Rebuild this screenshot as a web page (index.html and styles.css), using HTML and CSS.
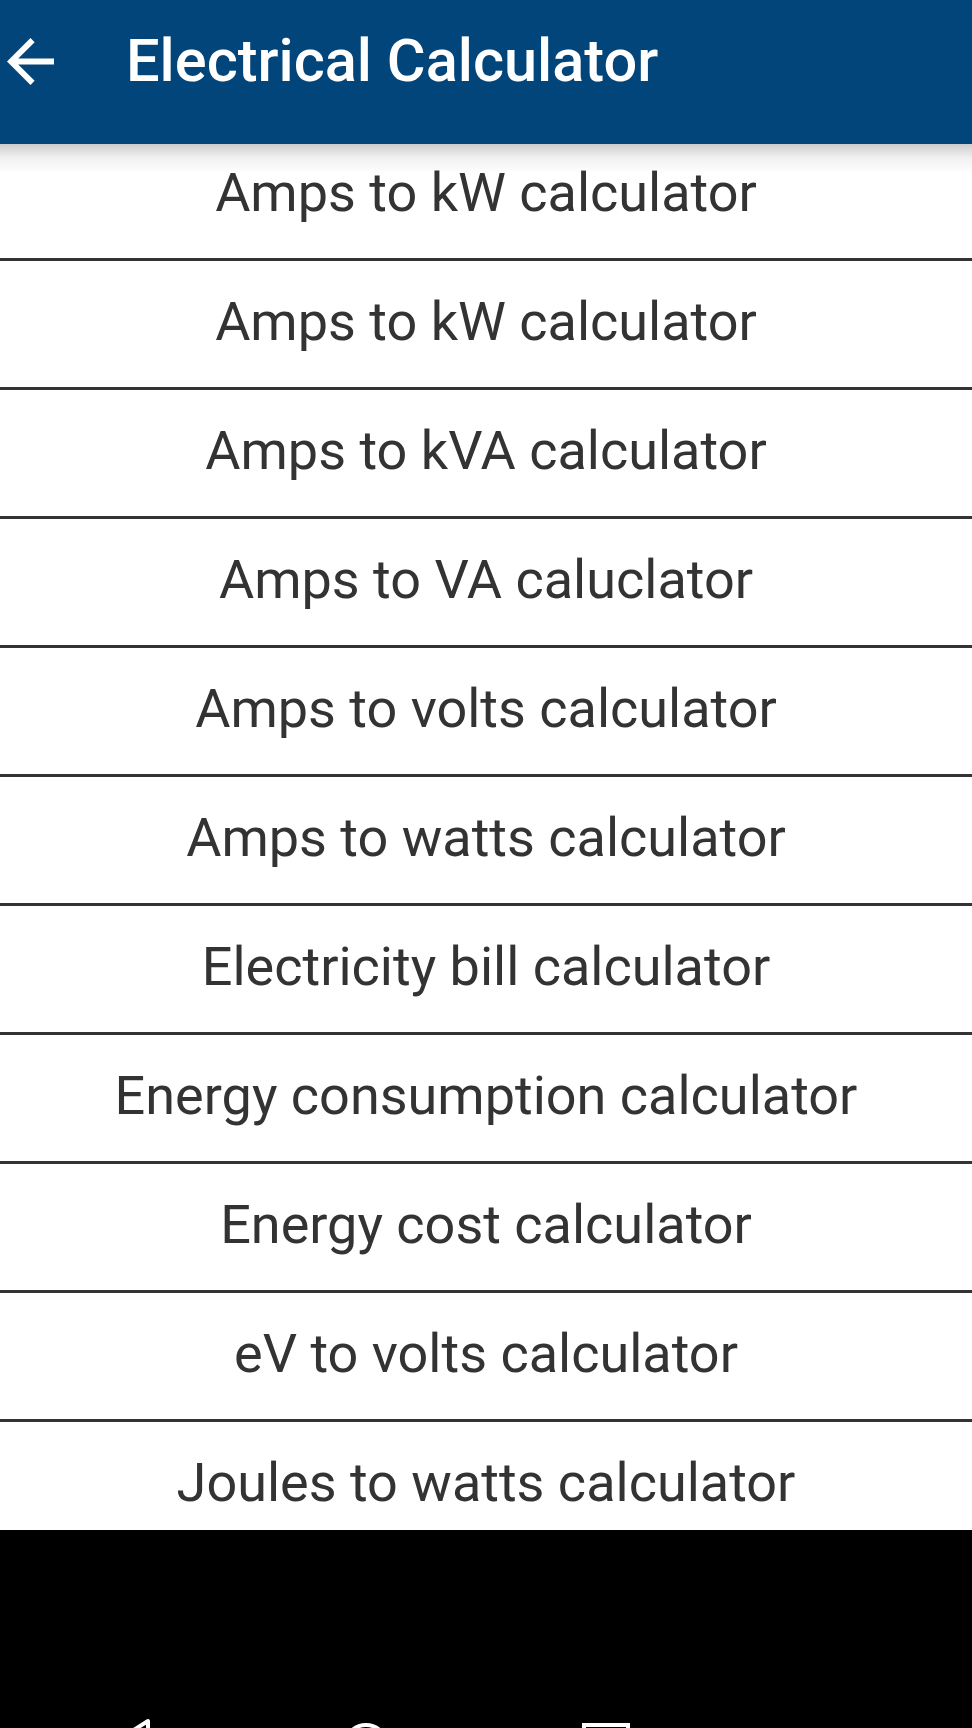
FILE: index.html
```html
<!DOCTYPE html>
<html lang="en">
<head>
<meta charset="utf-8">
<title>Electrical Calculator</title>
<link rel="stylesheet" href="styles.css">
</head>
<body>
<div class="screen">
  <header class="appbar">
    <svg class="back" width="47" height="47" viewBox="4 4 16 16" aria-hidden="true">
      <path fill="#ffffff" d="M20 11H7.83l5.59-5.59L12 4l-8 8 8 8 1.41-1.41L7.83 13H20v-2z"/>
    </svg>
    <h1 class="title">Electrical Calculator</h1>
  </header>
  <main class="content">
    <ul class="list">
      <li class="row">Amps to kW calculator</li>
      <li class="row">Amps to kW calculator</li>
      <li class="row">Amps to kVA calculator</li>
      <li class="row">Amps to VA caluclator</li>
      <li class="row">Amps to volts calculator</li>
      <li class="row">Amps to watts calculator</li>
      <li class="row">Electricity bill calculator</li>
      <li class="row">Energy consumption calculator</li>
      <li class="row">Energy cost calculator</li>
      <li class="row">eV to volts calculator</li>
      <li class="row">Joules to watts calculator</li>
    </ul>
  </main>
  <nav class="navbar">
    <svg class="navicons" width="972" height="198" viewBox="0 1530 972 198" aria-hidden="true">
      <polygon points="148,1721 148,1770 110,1745" fill="none" stroke="#ffffff" stroke-width="4" stroke-linejoin="round"/>
      <circle cx="366" cy="1746" r="21" fill="none" stroke="#ffffff" stroke-width="4"/>
      <rect x="584" y="1725" width="44" height="44" fill="none" stroke="#ffffff" stroke-width="4"/>
    </svg>
  </nav>
</div>
</body>
</html>
```

FILE: styles.css
```css
* {
  box-sizing: border-box;
}

html, body {
  margin: 0;
  padding: 0;
  background: #000000;
}

body {
  width: 972px;
  height: 1728px;
  overflow: hidden;
  font-family: Roboto, "Liberation Sans", Arial, sans-serif;
}

.screen {
  display: flex;
  flex-direction: column;
  width: 972px;
  height: 1728px;
}

.appbar {
  position: relative;
  z-index: 2;
  flex: 0 0 144px;
  height: 144px;
  display: flex;
  align-items: center;
  padding: 0 0 22px 7px;
  background: #02457a;
}

.appbar::after {
  content: "";
  position: absolute;
  left: 0;
  right: 0;
  top: 100%;
  height: 30px;
  background: linear-gradient(to bottom, rgba(0, 0, 0, 0.2), rgba(0, 0, 0, 0.06) 45%, rgba(0, 0, 0, 0));
  pointer-events: none;
}

.back {
  flex: 0 0 auto;
  display: block;
}

.title {
  margin: 0 0 0 72px;
  font-size: 59.5px;
  font-weight: 500;
  color: #ffffff;
  line-height: normal;
  letter-spacing: 0;
}

.content {
  position: relative;
  z-index: 1;
  flex: 0 0 1386px;
  height: 1386px;
  overflow: hidden;
  background: #ffffff;
}

.list {
  list-style: none;
  margin: -12px 0 0 0;
  padding: 0;
}

.row {
  height: 129px;
  display: flex;
  align-items: center;
  justify-content: center;
  padding-bottom: 6px;
  border-bottom: 3px solid #333333;
  font-size: 54px;
  font-weight: 400;
  color: #333333;
  white-space: nowrap;
}

.navbar {
  flex: 0 0 198px;
  height: 198px;
  background: #000000;
}

.navicons {
  display: block;
}
```
